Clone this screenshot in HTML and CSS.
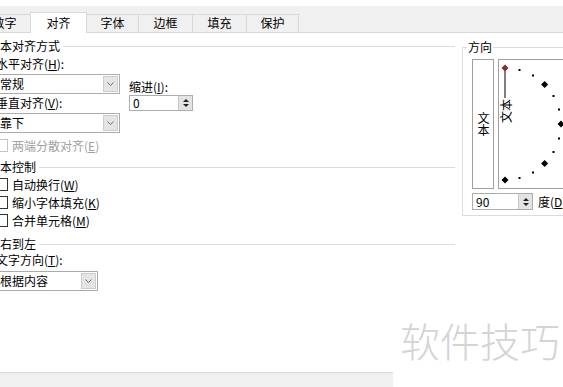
FILE: index.html
```html
<!DOCTYPE html>
<html lang="zh-CN">
<head>
    <meta charset="UTF-8">
    <meta name="viewport" content="width=device-width, initial-scale=1.0">
    <title>设置单元格格式 - 对齐</title>
    <link rel="stylesheet" href="styles.css">
</head>
<body>
    <div class="dialog">
        <!-- Tab strip -->
        <div class="tabs">
            <div class="tab tab-first">数字</div>
            <div class="tab active">对齐</div>
            <div class="tab">字体</div>
            <div class="tab tab-wide">边框</div>
            <div class="tab tab-wide">填充</div>
            <div class="tab">保护</div>
        </div>

        <div class="page">
            <div class="left">
                <div class="group-title"><span>文本对齐方式</span></div>
                <div class="align-row">
                    <div class="col-main">
                        <div class="label">水平对齐(<u>H</u>):</div>
                        <div class="combo combo-wide">
                            <span class="combo-value">常规</span>
                            <span class="drop"><svg width="7" height="4" viewBox="0 0 7 4"><path d="M0.5 0.5 L3.5 3.5 L6.5 0.5" fill="none" stroke="#6d6d6d"/></svg></span>
                        </div>
                        <div class="label label-gap">垂直对齐(<u>V</u>):</div>
                        <div class="combo combo-wide">
                            <span class="combo-value">靠下</span>
                            <span class="drop"><svg width="7" height="4" viewBox="0 0 7 4"><path d="M0.5 0.5 L3.5 3.5 L6.5 0.5" fill="none" stroke="#6d6d6d"/></svg></span>
                        </div>
                    </div>
                    <div class="col-indent">
                        <div class="label indent-label">缩进(<u>I</u>):</div>
                        <div class="spinner spinner-indent">
                            <span class="spin-value">0</span>
                            <span class="spin"><i class="up"></i><i class="down"></i></span>
                        </div>
                    </div>
                </div>
                <div class="check-row disabled first-check">
                    <span class="box"></span>两端分散对齐(<u>E</u>)
                </div>

                <div class="group-title gap-title"><span>文本控制</span></div>
                <div class="check-row"><span class="box"></span>自动换行(<u>W</u>)</div>
                <div class="check-row"><span class="box"></span>缩小字体填充(<u>K</u>)</div>
                <div class="check-row"><span class="box"></span>合并单元格(<u>M</u>)</div>

                <div class="group-title rtl-title"><span>从右到左</span></div>
                <div class="items">
                    <div class="label">文字方向(<u>T</u>):</div>
                    <div class="combo combo-dir">
                        <span class="combo-value">根据内容</span>
                        <span class="drop"><svg width="7" height="4" viewBox="0 0 7 4"><path d="M0.5 0.5 L3.5 3.5 L6.5 0.5" fill="none" stroke="#6d6d6d"/></svg></span>
                    </div>
                </div>
            </div>

            <!-- Orientation box -->
            <fieldset class="orient">
                <legend>方向</legend>
                <div class="orient-body">
                    <div class="orient-top">
                        <div class="text-btn"><span>文本</span></div>
                        <div class="dial">
                            <svg width="90" height="128" viewBox="0 0 90 128">
                                <line x1="6" y1="11" x2="6" y2="38" stroke="#000" stroke-width="1"/>
                                <text transform="translate(6 51) rotate(-90)" text-anchor="middle" dominant-baseline="central" font-size="12" font-family="Noto Sans CJK SC, sans-serif">文本</text>
                                <polygon points="6,4.5 9.5,8 6,11.5 2.5,8" fill="#8b2b2b"/>
                                <polygon points="45.6,20.9 49.1,24.4 45.6,27.9 42.1,24.4" fill="#000"/>
                                <polygon points="62,60.5 65.5,64 62,67.5 58.5,64" fill="#000"/>
                                <polygon points="45.6,100.1 49.1,103.6 45.6,107.1 42.1,103.6" fill="#000"/>
                                <polygon points="6,116.5 9.5,120 6,123.5 2.5,120" fill="#000"/>
                                <rect x="19.5" y="9" width="2" height="2"/>
                                <rect x="33" y="14.5" width="2" height="2"/>
                                <rect x="53.5" y="35" width="2" height="2"/>
                                <rect x="59" y="48.5" width="2" height="2"/>
                                <rect x="59" y="77.5" width="2" height="2"/>
                                <rect x="53.5" y="91" width="2" height="2"/>
                                <rect x="33" y="111.5" width="2" height="2"/>
                                <rect x="19.5" y="117" width="2" height="2"/>
                            </svg>
                        </div>
                    </div>
                    <div class="deg-row">
                        <div class="spinner spinner-deg">
                            <span class="spin-value">90</span>
                            <span class="spin"><i class="up"></i><i class="down"></i></span>
                        </div>
                        <span class="deg-label">度(<u>D</u>)</span>
                    </div>
                </div>
            </fieldset>
        </div>

        <div class="footer"></div>

        <div class="watermark">软件技巧</div>
    </div>
</body>
</html>
```

FILE: styles.css
```css
* {
    box-sizing: border-box;
}

body {
    margin: 0;
    background-color: #fff;
    font-family: "Noto Sans CJK SC", "Microsoft YaHei", sans-serif;
    font-size: 12px;
    color: #000;
    overflow: hidden;
}

u {
    text-decoration: underline;
}

.dialog {
    position: relative;
    width: 563px;
    height: 387px;
    display: flex;
    flex-direction: column;
    overflow: hidden;
}

/* Tabs */
.tabs {
    margin-top: 6px;
    height: 27px;
    flex-shrink: 0;
    background-color: #f0f0f0;
    border-bottom: 1px solid #d9d9d9;
    display: flex;
    align-items: flex-end;
}

.tab {
    width: 53px;
    height: 18px;
    line-height: 16px;
    margin-left: -1px;
    text-align: center;
    background-color: #f0f0f0;
    border: 1px solid #d9d9d9;
    border-bottom: none;
}

.tab-first {
    margin-left: -22px;
}

.tab-wide {
    width: 55px;
}

.tab.active {
    width: 57px;
    height: 21px;
    line-height: 20px;
    margin-bottom: -1px;
    background-color: #fff;
    position: relative;
}

/* Page */
.page {
    flex: 1;
    display: flex;
    align-items: flex-start;
}

.left {
    margin-left: -12px;
    width: 467px;
    flex-shrink: 0;
    padding-top: 5px;
}

.group-title {
    display: flex;
    align-items: center;
    height: 16px;
    line-height: 16px;
}

.group-title::after {
    content: "";
    flex: 1;
    border-top: 1px solid #dcdcdc;
    margin-left: 3px;
}

.gap-title {
    margin-top: 6px;
}

.rtl-title {
    margin-top: 7px;
}

.label {
    height: 16px;
    line-height: 16px;
    white-space: nowrap;
}

.label-gap {
    margin-top: 1px;
}

.align-row {
    display: flex;
    margin-top: 2px;
    padding-left: 8px;
}

.col-main {
    width: 124px;
}

.col-indent {
    margin-left: 9px;
    padding-top: 23px;
}

.indent-label {
    height: 16px;
    line-height: 15px;
}

.combo {
    display: flex;
    align-items: center;
    height: 20px;
    margin-top: 2px;
    border: 1px solid #acacac;
    background-color: #fff;
}

.combo-wide {
    width: 124px;
}

.combo-dir {
    width: 102px;
    margin-top: 3px;
}

.combo-value {
    flex: 1;
    padding-left: 3px;
    line-height: 16px;
}

.drop {
    width: 15px;
    height: 16px;
    margin-right: 1px;
    display: flex;
    align-items: center;
    justify-content: center;
    background-color: #e5e5e5;
    border: 1px solid #cdcdcd;
}

.items {
    padding-left: 8px;
}

/* Spinners */
.spinner {
    display: flex;
    align-items: center;
    height: 16px;
    border: 1px solid #abadb3;
    background-color: #fff;
}

.spinner-indent {
    width: 64px;
}

.spinner-deg {
    width: 61px;
    height: 17px;
}

.spin-value {
    flex: 1;
    padding-left: 3px;
    line-height: 14px;
}

.spin {
    width: 14px;
    height: 100%;
    display: flex;
    flex-direction: column;
    align-items: center;
    justify-content: center;
    gap: 2px;
    background-color: #e3e3e3;
    border-left: 1px solid #c6c6c6;
}

.spin i {
    width: 0;
    height: 0;
    border-left: 3px solid transparent;
    border-right: 3px solid transparent;
}

.spin .up {
    border-bottom: 3px solid #222;
}

.spin .down {
    border-top: 3px solid #222;
}

/* Checkboxes */
.check-row {
    display: flex;
    align-items: center;
    height: 18px;
    padding-left: 7px;
    white-space: nowrap;
}

.first-check {
    margin-top: 4px;
    height: 16px;
}

.box {
    width: 13px;
    height: 13px;
    margin-right: 4px;
    border: 1px solid #333;
    background-color: #fff;
}

.check-row.disabled {
    color: #a0a0a0;
}

.check-row.disabled .box {
    border-color: #c4c4c4;
}

/* Orientation */
.orient {
    margin: 5px 0 0 7px;
    padding: 3px 0 5px 0;
    width: 140px;
    min-width: 0;
    flex-shrink: 0;
    border: 1px solid #dcdcdc;
}

.orient legend {
    margin-left: 4px;
    padding: 0 1px;
    line-height: 18px;
}

.orient-body {
    padding-left: 9px;
}

.orient-top {
    display: flex;
    gap: 4px;
    height: 130px;
}

.text-btn {
    width: 22px;
    height: 130px;
    flex-shrink: 0;
    display: flex;
    align-items: center;
    justify-content: center;
    border: 1px solid #a0a0a0;
}

.text-btn span {
    writing-mode: vertical-rl;
    line-height: 12px;
}

.dial {
    width: 92px;
    height: 130px;
    flex-shrink: 0;
    border: 1px solid #a0a0a0;
}

.dial svg {
    display: block;
}

.deg-row {
    display: flex;
    align-items: center;
    margin-top: 4px;
}

.deg-label {
    margin-left: 5px;
    white-space: nowrap;
}

/* Bottom strip */
.footer {
    margin-top: auto;
    width: 393px;
    height: 15px;
    flex-shrink: 0;
    background-color: #f0f0f0;
    border-top: 1px solid #d5d5d5;
}

.watermark {
    position: absolute;
    left: 400px;
    top: 320px;
    font-size: 40px;
    line-height: 40px;
    font-weight: 300;
    color: #d4d4d4;
    white-space: nowrap;
}
```
